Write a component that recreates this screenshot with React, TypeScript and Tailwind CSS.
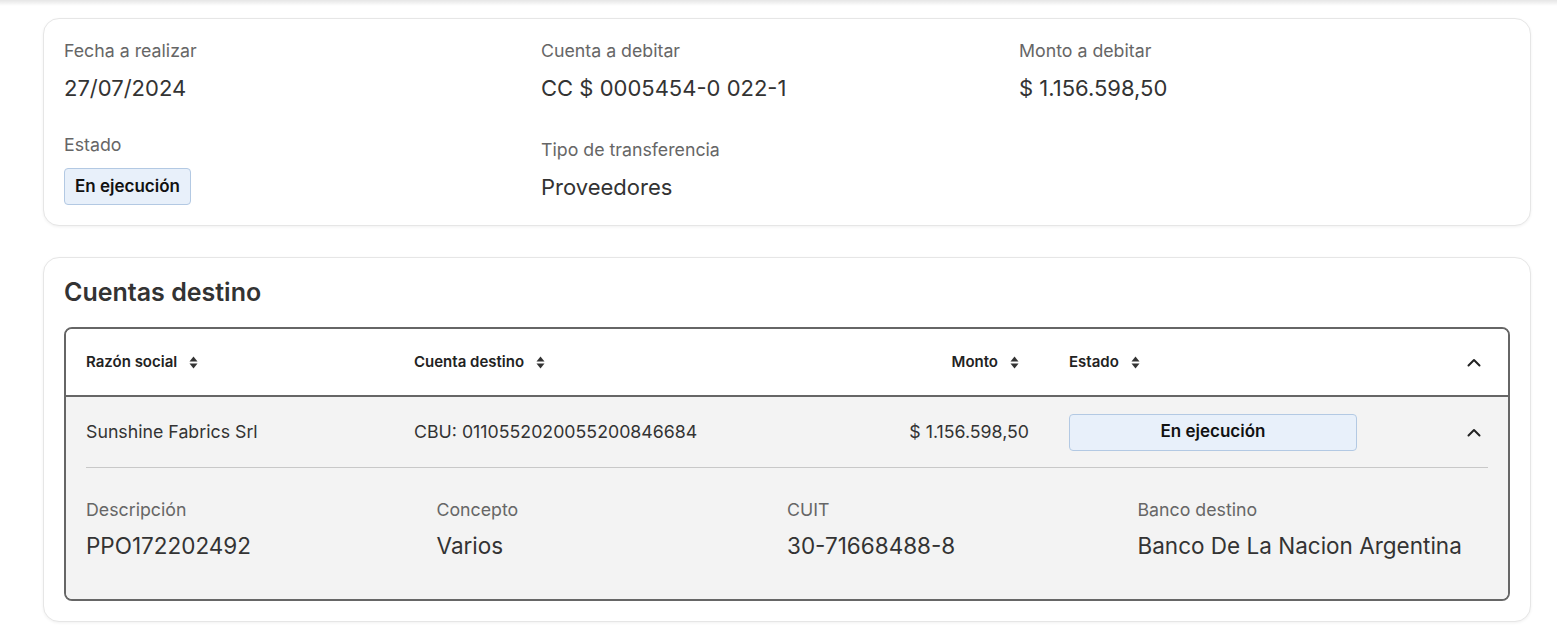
import React from "react"

const font = { fontFamily: "Inter, 'Noto Sans', sans-serif" }

function SortIcon() {
  return (
    <svg width="9" height="13" viewBox="0 0 9 13" className="ml-3 shrink-0">
      <path d="M4.5 0.5 L8.5 5.5 H0.5 Z" fill="#333" />
      <path d="M4.5 12.5 L8.5 7.5 H0.5 Z" fill="#333" />
    </svg>
  )
}

function ChevronUp() {
  return (
    <svg width="14" height="9" viewBox="0 0 14 9">
      <path d="M1.5 7.5 L7 2 L12.5 7.5" fill="none" stroke="#222" strokeWidth="2" strokeLinecap="round" strokeLinejoin="round" />
    </svg>
  )
}

function Field(props: { label: string; value: string }) {
  return (
    <div className="flex flex-col">
      <div className="text-[17.75px] leading-6 text-[#666]">{props.label}</div>
      <div className="mt-[10px] text-[22px] leading-[30px] text-[#333]">{props.value}</div>
    </div>
  )
}

function Badge(props: { wide?: boolean }) {
  return (
    <div
      className={
        props.wide
          ? "flex h-[37px] w-full items-center justify-center rounded-[4px] border border-[#b3c9e3] bg-[#e8f0fa] text-[17px] font-semibold text-[#111]"
          : "flex h-[37px] items-center rounded-[4px] border border-[#b3c9e3] bg-[#e8f0fa] px-[10px] text-[17px] font-semibold text-[#111]"
      }
    >
      En ejecución
    </div>
  )
}

export default function App() {
  const details = [
    { label: "Descripción", value: "PPO172202492" },
    { label: "Concepto", value: "Varios" },
    { label: "CUIT", value: "30-71668488-8" },
    { label: "Banco destino", value: "Banco De La Nacion Argentina" },
  ]

  return (
    <div className="min-h-[629px] w-full bg-white" style={font}>
      <div className="h-[6px] w-full bg-gradient-to-b from-black/10 to-transparent" />
      <div className="flex flex-col gap-[31px] pl-[43px] pr-[26px] pt-[12px]">
        {/* resumen */}
        <div className="rounded-[16px] border border-[#e6e6e6] bg-white pb-[20px] pl-[20px] pr-[20px] pt-[20px] shadow-[0_1px_3px_rgba(0,0,0,0.06)]">
          <div className="grid grid-cols-[477px_478px_1fr]">
            <Field label="Fecha a realizar" value="27/07/2024" />
            <Field label="Cuenta a debitar" value="CC $ 0005454-0 022-1" />
            <Field label="Monto a debitar" value="$ 1.156.598,50" />
          </div>
          <div className="mt-[30px] grid grid-cols-[477px_478px_1fr] items-end">
            <div className="flex flex-col items-start">
              <div className="text-[17.75px] leading-6 text-[#666]">Estado</div>
              <div className="mt-[11px]">
                <Badge />
              </div>
            </div>
            <div className="flex flex-col pb-[3px]">
              <div className="text-[17.75px] leading-6 text-[#666]">Tipo de transferencia</div>
              <div className="mt-[10px] text-[22px] leading-[30px] text-[#333]">Proveedores</div>
            </div>
            <div />
          </div>
        </div>

        {/* cuentas destino */}
        <div className="rounded-[16px] border border-[#e6e6e6] bg-white pb-[20px] pl-[20px] pr-[20px] pt-[18px] shadow-[0_1px_3px_rgba(0,0,0,0.06)]">
          <h2 className="text-[25px] font-semibold leading-8 text-[#333]">Cuentas destino</h2>
          <div className="mt-[19px] overflow-hidden rounded-[8px] border-2 border-[#666]">
            <div className="grid h-[68px] grid-cols-[328px_328px_327px_328px_63px_1fr] items-center border-b-2 border-[#666] bg-white text-[15px] font-semibold text-[#222]">
              <div className="flex items-center px-5">Razón social<SortIcon /></div>
              <div className="flex items-center px-5">Cuenta destino<SortIcon /></div>
              <div className="flex items-center justify-end pl-5 pr-[30px]">Monto<SortIcon /></div>
              <div className="flex items-center px-5">Estado<SortIcon /></div>
              <div />
              <div className="flex justify-center pr-[1px]"><ChevronUp /></div>
            </div>
            <div className="bg-[#f3f3f3]">
              <div className="grid h-[70px] grid-cols-[328px_328px_327px_328px_63px_1fr] items-center text-[17.75px] text-[#333]">
                <div className="px-5">Sunshine Fabrics Srl</div>
                <div className="px-5">CBU: 0110552020055200846684</div>
                <div className="px-5 text-right">$ 1.156.598,50</div>
                <div className="px-5"><Badge wide /></div>
                <div />
                <div className="flex justify-center pr-[1px]"><ChevronUp /></div>
              </div>
              <div className="mx-5 border-t border-[#c8c8c8]" />
              <div className="grid grid-cols-4 px-5 pb-[38px] pt-[30px]">
                {details.map((d) => (
                  <div key={d.label} className="flex flex-col">
                    <div className="text-[17.75px] leading-6 text-[#666]">{d.label}</div>
                    <div className="mt-[9px] text-[22.5px] leading-[30px] text-[#333]">{d.value}</div>
                  </div>
                ))}
              </div>
            </div>
          </div>
        </div>
      </div>
    </div>
  )
}
